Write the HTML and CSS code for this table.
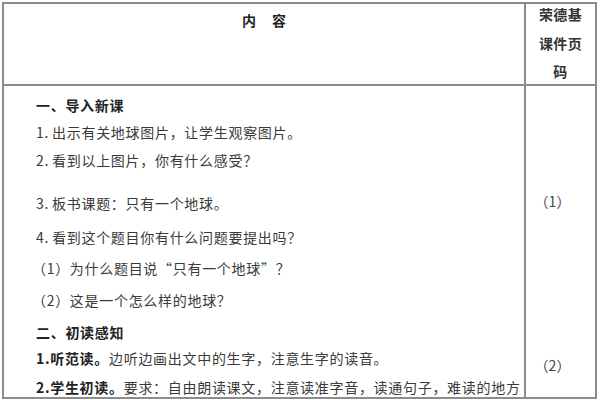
FILE: index.html
```html
<!DOCTYPE html>
<html lang="zh">
<head>
<meta charset="utf-8">
<link rel="stylesheet" href="styles.css">
</head>
<body>
<div class="sheet">
  <div class="head">
    <div class="c1 head-title"><span>内</span><span>容</span></div>
    <div class="c2 head-side">荣德基<br>课件页<br>码</div>
  </div>
  <div class="row row1">
    <div class="c1 lines">
      <p class="sec">一、导入新课</p>
      <p class="l2"><span class="num">1.</span>出示有关地球图片，让学生观察图片。</p>
      <p class="l3"><span class="num">2.</span>看到以上图片，你有什么感受？</p>
      <p class="l4"><span class="num">3.</span>板书课题：只有一个地球。</p>
      <p class="l5"><span class="num">4.</span>看到这个题目你有什么问题要提出吗？</p>
      <p class="l6 sub">（1）为什么题目说“只有一个地球”？</p>
      <p class="l7 sub">（2）这是一个怎么样的地球？</p>
    </div>
    <div class="c2 page p1">（1）</div>
  </div>
  <div class="row row2">
    <div class="c1 lines lines2">
      <p class="sec">二、初读感知</p>
      <p class="m2"><b>1.听范读。</b>边听边画出文中的生字，注意生字的读音。</p>
      <p class="m3"><b>2.学生初读。</b>要求：自由朗读课文，注意读准字音，读通句子，难读的地方</p>
    </div>
    <div class="c2 page p2">（2）</div>
  </div>
</div>
</body>
</html>
```
FILE: styles.css
```css
html, body {
  margin: 0;
  padding: 0;
  background: #fff;
}
body {
  font-family: "Noto Sans CJK SC", "Noto Sans", sans-serif;
  color: #3a3a3a;
}
.sheet {
  box-sizing: border-box;
  margin: 2px 0 0 2px;
  width: 595px;
  height: 397px;
  border: 2px solid #8c8c8c;
  display: grid;
  grid-template-rows: 82px 230px 1fr;
  overflow: hidden;
}
.head, .row {
  display: grid;
  grid-template-columns: 520px 1fr;
}
.head {
  border-bottom: 2px solid #8c8c8c;
}
.c2 {
  border-left: 2px solid #8c8c8c;
}
.head-title {
  display: flex;
  justify-content: center;
  gap: 16px;
  font-size: 14px;
  font-weight: bold;
  color: #222;
  line-height: 20px;
  padding-top: 6px;
}
.head-side {
  margin-top: -4px;
  font-size: 14px;
  font-weight: bold;
  color: #333;
  line-height: 28.5px;
  letter-spacing: 0.3px;
  text-align: center;
}
.lines {
  padding: 9px 0 0 32px;
  font-size: 14px;
  letter-spacing: 0.7px;
  line-height: 20px;
}
.lines p {
  margin: 0;
  white-space: nowrap;
}
.lines b {
  color: #222;
}
.num {
  margin-right: 3px;
}
.sec {
  font-weight: bold;
  color: #222;
}
.sub {
  margin-left: -4px !important;
}
.l2 { margin-top: 7px !important; }
.l3 { margin-top: 8px !important; }
.l4 { margin-top: 23px !important; }
.l5 { margin-top: 14px !important; }
.l6 { margin-top: 11px !important; }
.l7 { margin-top: 12px !important; }
.lines2 {
  padding-top: 6px;
}
.m2 { margin-top: 6px !important; }
.m3 { margin-top: 9px !important; }
.page {
  font-size: 14px;
  color: #444;
  display: flex;
  justify-content: center;
  padding-right: 16px;
  line-height: 20px;
}
.p1 {
  align-items: center;
}
.p2 {
  align-items: flex-start;
  padding-top: 39px;
}
```
